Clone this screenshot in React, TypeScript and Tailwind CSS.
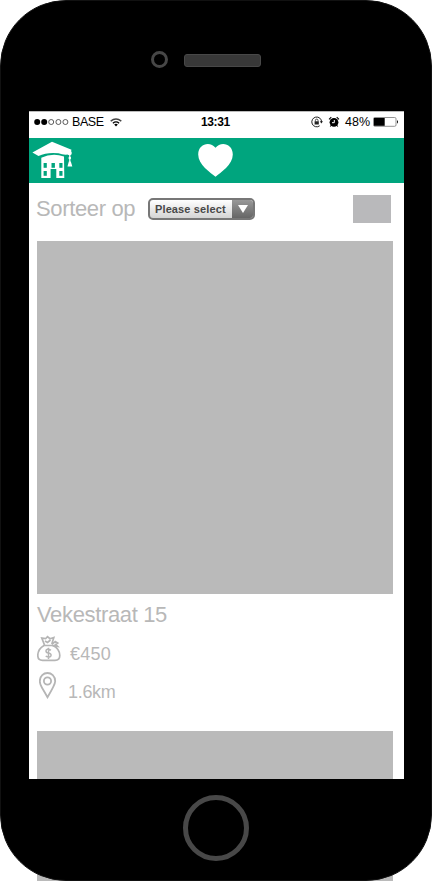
import React from "react";

function StatusBar() {
  return (
    <div className="flex h-[27px] items-center border-t border-[#bbb] pb-[6px] pl-[5px] text-[12px] leading-none text-black">
      <svg width="36" height="8" viewBox="0 0 36 8">
        <circle cx="3.2" cy="4" r="3" />
        <circle cx="10.2" cy="4" r="3" />
        {[17.2, 24.4, 31.4].map((x) => (
          <circle key={x} cx={x} cy="4" r="2.5" fill="none" stroke="#333" strokeWidth="0.8" />
        ))}
      </svg>
      <span className="ml-[2px] w-[33px] whitespace-nowrap text-[12.5px] tracking-[-0.4px]">BASE</span>
      <svg className="ml-[5px]" width="12" height="9" viewBox="0 0 12 9" fill="none" stroke="#000" strokeWidth="1.4">
        <path d="M.7 3.1Q6-1.2 11.3 3.1" stroke="#444" />
        <path d="M2.9 5.2Q6 2.6 9.1 5.2" />
        <path d="M4.2 6.5Q6 5.2 7.8 6.5L6 8.6Z" fill="#000" stroke="none" />
      </svg>
      <span className="ml-[79px] w-[30px] whitespace-nowrap text-[12px] font-bold tracking-[-0.4px]">13:31</span>
      <svg className="ml-[80px]" width="12" height="12" viewBox="0 0 12 12" fill="none" stroke="#222">
        <path d="M10.6 6A4.9 4.9 0 1 0 8.7 9.8" strokeWidth="1" />
        <path d="M8.8 5.3h3.2L10.4 7.5Z" fill="#222" stroke="none" />
        <rect x="3.6" y="5.3" width="4.2" height="3.2" fill="#222" stroke="none" />
        <path d="M4.4 5.5V4.4a1.3 1.3 0 0 1 2.6 0v1.1" strokeWidth="0.8" />
      </svg>
      <svg className="ml-[5px]" width="12" height="12" viewBox="0 0 12 12">
        <circle cx="6" cy="6.3" r="4.4" />
        <path d="M1 3.3L3.3 1.2M11 3.3L8.7 1.2M3 9.5l-.8 1M9 9.5l.8 1" stroke="#000" strokeWidth="1.1" />
        <path d="M6.3 4v2.7H4" fill="none" stroke="#fff" strokeWidth="1" />
      </svg>
      <span className="ml-[5px] w-[26px] whitespace-nowrap text-[12.5px]">48%</span>
      <svg className="ml-[2px]" width="26" height="10" viewBox="0 0 26 10">
        <rect x=".5" y=".5" width="22.5" height="8.8" rx="1.3" fill="#fff" stroke="#777" strokeWidth=".8" />
        <rect x="1" y="1" width="10.7" height="7.8" />
        <path d="M24 3q2 1.8 0 3.7Z" />
      </svg>
    </div>
  );
}

function HouseLogo() {
  return (
    <svg width="42" height="38" viewBox="0 0 42 38" fill="#fff">
      <path d="M.4 11.5L20 .7 39.5 8.8 38 13.2Q32 14.5 26.5 12.3 15 11 6.5 15Z" />
      <path d="M9.3 16.8Q20 11.6 32 15.4L32.3 37H24.3V28H18.6V37H9.3Z" />
      <path d="M37.8 11.5V24" stroke="#fff" strokeWidth="1.2" />
      <circle cx="37.6" cy="12" r="2.2" />
      <circle cx="37.8" cy="17" r="1.3" />
      <path d="M36.8 20.5h2l1.5 5h-4.8Z" />
      <g fill="#00a57e">
        <rect x="11.6" y="22" width="3.2" height="4.8" />
        <rect x="19.5" y="22" width="3.4" height="4.8" />
        <rect x="27.3" y="22" width="3.2" height="4.8" />
        <rect x="11.6" y="30" width="3.2" height="4.8" />
        <rect x="27.3" y="30" width="3.2" height="4.8" />
      </g>
    </svg>
  );
}

function Header() {
  return (
    <div className="flex h-[45px] items-start bg-[#00a57e] pl-[3px] pt-[3px]">
      <HouseLogo />
      <svg className="ml-[124px] mt-[2px]" width="36" height="36" viewBox="0 0 36 36">
        <path d="M17.5 33.8C12.5 29.3 .2 22 .2 11.5.2 .2 12.5-2 17.5 4.8 22.5-2 34.8 .2 34.8 11.5 34.8 22 22.5 29.3 17.5 33.8Z" fill="#fff" />
      </svg>
    </div>
  );
}

function SortRow() {
  return (
    <div className="flex h-[58px] items-start">
      <span className="ml-[7px] mt-[14px] w-[100px] whitespace-nowrap text-[22px] leading-6 tracking-[-0.35px]">Sorteer op</span>
      <button className="ml-[12px] mt-[15px] flex h-[22px] w-[107px] items-stretch overflow-hidden rounded-[5px] border-2 border-[#777] bg-linear-to-b from-white to-[#d4d4d4]">
        <span className="w-[82px] whitespace-nowrap pl-[5px] text-left text-[11px] leading-[19px] font-bold tracking-[0.12px] text-[#484848]">
          Please select
        </span>
        <span className="flex flex-1 items-center justify-center bg-linear-to-b from-[#999] to-[#666]">
          <svg width="10" height="8" viewBox="0 0 10 8">
            <path d="M0 0H10L5 8Z" fill="#fff" />
          </svg>
        </span>
      </button>
      <div className="ml-[98px] mt-[12px] h-[28px] w-[38px] bg-[#b9b9bb]" />
    </div>
  );
}

function Listing() {
  return (
    <div className="pl-[8px]">
      <div className="h-[353px] w-[356px] bg-[#bababa]" />
      <div className="mt-[9px] whitespace-nowrap text-[22px] leading-6 tracking-[-0.35px]">Vekestraat 15</div>
      <div className="mt-[8px] flex h-[28px] items-start">
        <svg width="24" height="27" viewBox="0 0 24 27" fill="none" stroke="#b5b5b5" strokeWidth="1.7">
          <path d="M7 10.5Q.8 14 .8 20.5 .8 25.3 5.5 25.3H18Q22.8 25.3 22.8 20.5 22.8 14 16 10.5Z" />
          <path d="M7.5 10L4.8 3 8.6 3.7 10.5 1.6 13 3.7 16.8 2.5 14.8 9M8 6l2.5 1.5 3-2.5M15 9.5l3.2-3 2.5 1.5-2.2 1.5 2 1.8-5-.6" />
          <path d="M14 15.2Q9.2 12.8 9 15.9 9 17.7 11.5 18.1 14.5 18.6 14 20.8 12.5 23.2 8.7 21.2M11.5 12.8V24" strokeWidth="1.5" />
        </svg>
        <span className="ml-[9px] mt-[9px] whitespace-nowrap text-[18px] leading-5 tracking-[0.2px]">€450</span>
      </div>
      <div className="mt-[9px] flex h-[28px] items-start">
        <svg className="ml-[2px]" width="18" height="27" viewBox="0 0 18 27" fill="none" stroke="#b5b5b5" strokeWidth="1.8">
          <path d="M8.5 25.2Q5.5 20 3 15.8.8 12 .8 9.3C.8-1.8 16.2-1.8 16.2 9.3 16.2 12 14.2 15.8 8.5 25.2Z" />
          <circle cx="8.5" cy="9" r="3.6" />
        </svg>
        <span className="ml-[11px] mt-[10px] whitespace-nowrap text-[18px] leading-5 tracking-[-0.3px]">1.6km</span>
      </div>
      <div className="mt-[31px] h-[150px] w-[356px] bg-[#bababa]" />
    </div>
  );
}

export default function App() {
  return (
    <div className="relative h-[881px] w-[432px] overflow-hidden bg-white font-['Liberation_Sans',sans-serif] text-[#b8b8b8]">
      <div className="absolute bottom-0 left-[37px] h-[40px] w-[356px] bg-[#bababa]" />
      <div className="relative flex h-full flex-col rounded-[66px] border border-[#111] bg-black">
        <div className="flex h-[110px] items-start pl-[150px] pt-[50px]">
          <div className="h-[17px] w-[17px] rounded-full border-[3px] border-[#474747]" />
          <div className="ml-[16px] mt-[3px] h-[13px] w-[77px] rounded-[3px] border border-[#484848] bg-[#383838]" />
        </div>
        <div className="ml-[28px] h-[668px] w-[375px] overflow-hidden bg-white">
          <StatusBar />
          <Header />
          <SortRow />
          <Listing />
        </div>
        <div className="pl-[182px] pt-[16px]">
          <div className="h-[66px] w-[66px] rounded-full border-[5px] border-[#484848]" />
        </div>
      </div>
    </div>
  );
}
